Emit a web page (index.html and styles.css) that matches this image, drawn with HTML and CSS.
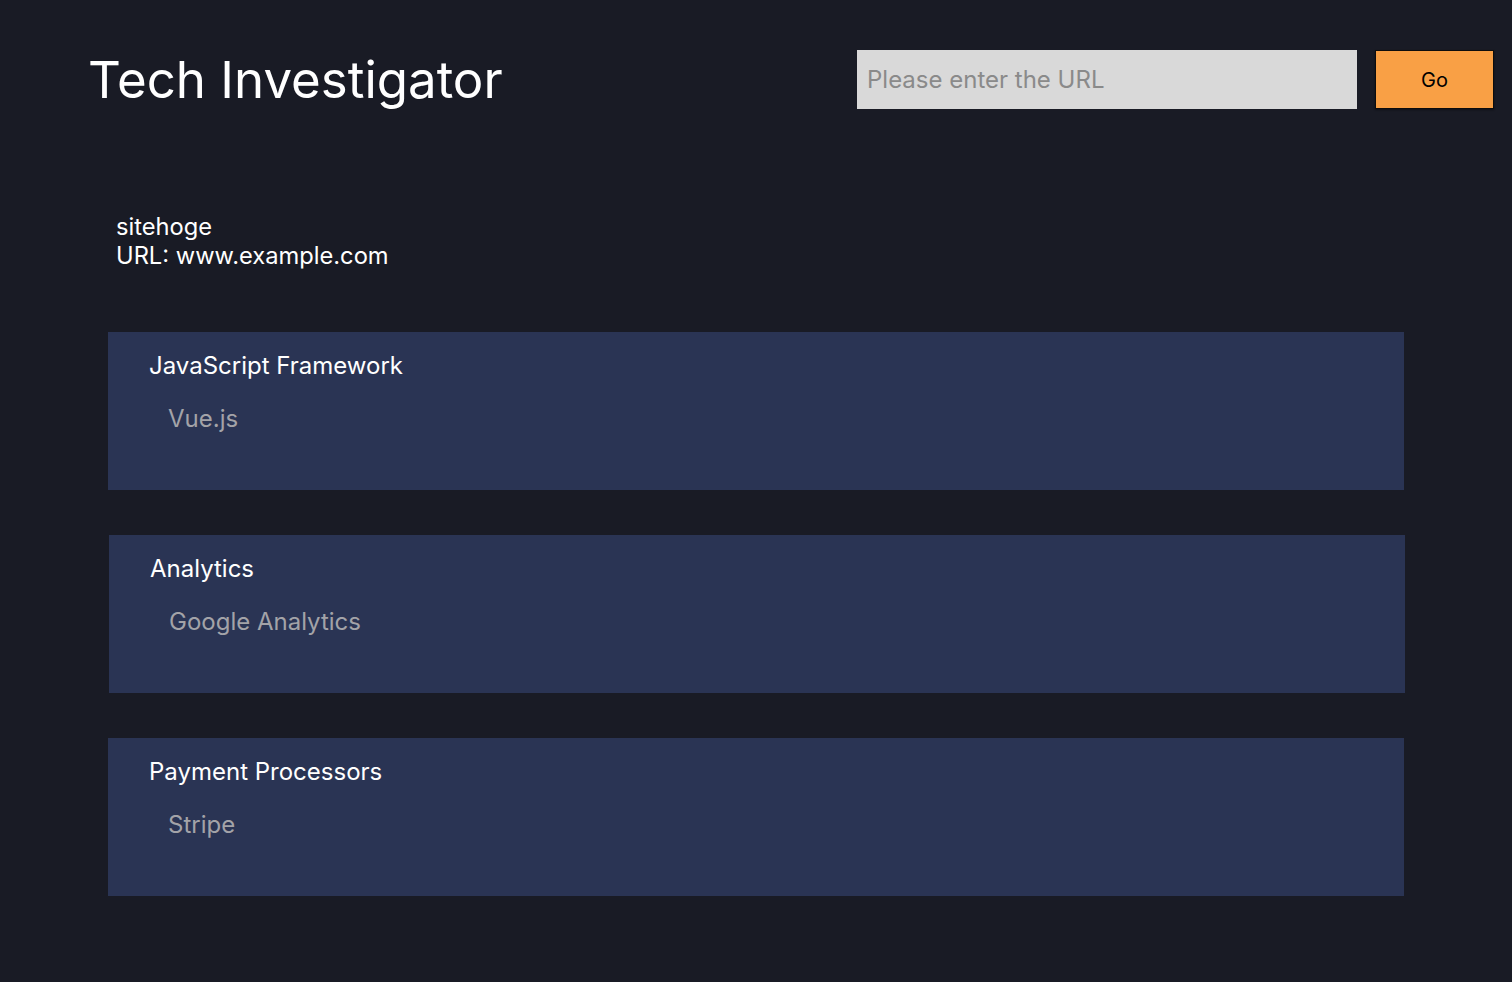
FILE: index.html
```html
<!DOCTYPE html>
<html lang="en">
<head>
<meta charset="utf-8">
<title>Tech Investigator</title>
<link rel="stylesheet" href="styles.css">
</head>
<body>
<div class="page">
  <header class="header">
    <h1 class="title">Tech Investigator</h1>
    <form class="search" onsubmit="return false">
      <input class="url-input" type="text" placeholder="Please enter the URL">
      <button class="go-btn" type="submit">Go</button>
    </form>
  </header>
  <section class="site-info">
    <div>sitehoge</div>
    <div>URL: www.example.com</div>
  </section>
  <main class="cards">
    <div class="card">
      <div class="card-title">JavaScript Framework</div>
      <div class="card-item">Vue.js</div>
    </div>
    <div class="card card-shift">
      <div class="card-title">Analytics</div>
      <div class="card-item">Google Analytics</div>
    </div>
    <div class="card">
      <div class="card-title">Payment Processors</div>
      <div class="card-item">Stripe</div>
    </div>
  </main>
</div>
</body>
</html>
```

FILE: styles.css
```css
* { box-sizing: border-box; }
html, body {
  margin: 0;
  padding: 0;
  background: #191b25;
  height: 100%;
}
body {
  font-family: Inter, "Noto Sans", sans-serif;
  color: #ffffff;
}
.page {
  padding: 0 18px 0 88px;
}
.header {
  display: flex;
  justify-content: space-between;
  align-items: flex-start;
  padding-top: 50px;
  height: 200px;
}
.title {
  margin: 0;
  font-size: 51px;
  font-weight: 400;
  line-height: 60px;
  letter-spacing: 0;
}
.search {
  display: flex;
  gap: 18px;
  margin: 0;
}
.url-input {
  width: 500px;
  height: 59px;
  border: none;
  background: #d9d9d9;
  padding: 0 10px;
  font-family: Inter, "Noto Sans", sans-serif;
  font-size: 24px;
  color: #333;
  outline: none;
}
.url-input::placeholder { color: #8a8a8a; }
.go-btn {
  width: 119px;
  height: 59px;
  background: #f9a045;
  border: 1px solid #0d0d0d;
  box-shadow: 0 1px 2px rgba(0,0,0,0.4);
  font-family: Inter, "Noto Sans", sans-serif;
  font-size: 20px;
  color: #000;
  padding: 0;
}
.site-info {
  padding-left: 28px;
  font-size: 23.7px;
  line-height: 29px;
  margin-top: 12px;
}
.cards {
  margin-top: 62px;
  margin-left: 20px;
  display: flex;
  flex-direction: column;
  align-items: flex-start;
  gap: 45px;
}
.card {
  width: 1296px;
  background: #2a3454;
  height: 158px;
  padding: 20px 41px;
}
.card-shift { margin-left: 1px; }
.card-title {
  font-size: 24px;
  line-height: 28px;
}
.card-item {
  margin-top: 25px;
  padding-left: 19px;
  font-size: 24px;
  line-height: 28px;
  color: #a3a3a8;
}
```
